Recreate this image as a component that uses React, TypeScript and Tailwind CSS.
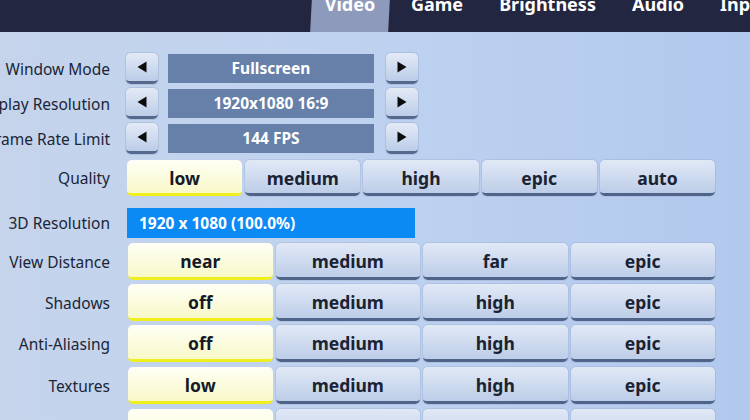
import React from 'react'

const font = { fontFamily: '"Noto Sans", "Open Sans", sans-serif' }

function ArrowButton({ dir }: { dir: 'left' | 'right' }) {
  return (
    <div className="w-[32px] h-[31px] rounded-[5px] bg-gradient-to-b from-[#e3eaf6] to-[#bccde8] border-b-[3px] border-[#55698f] flex items-center justify-center shadow-[0_0_0_1px_rgba(120,140,175,0.25)]">
      <svg width="12" height="12" viewBox="0 0 12 12">
        {dir === 'left' ? (
          <path d="M10.5 0.5 L1.5 6 L10.5 11.5 Z" fill="#0c0c0c" />
        ) : (
          <path d="M1.5 0.5 L10.5 6 L1.5 11.5 Z" fill="#0c0c0c" />
        )}
      </svg>
    </div>
  )
}

function Label({ text }: { text: string }) {
  return (
    <div className="w-[110px] shrink-0 flex justify-end mr-[17px] pt-[2px]">
      <span className="whitespace-nowrap text-[15.5px] text-[#1b2538]">{text}</span>
    </div>
  )
}

function Choice({ text, active }: { text: string; active?: boolean }) {
  return (
    <div
      className={
        active
          ? 'h-full pt-[3px] rounded-[5px] bg-gradient-to-b from-[#fffff6] to-[#f8f8c8] border-b-[3px] border-[#f0ee1c] flex items-center justify-center text-[17.5px] font-bold text-[#151a26]'
          : 'h-full pt-[3px] rounded-[5px] bg-gradient-to-b from-[#e1e9f6] to-[#bdcde8] border-b-[3px] border-[#506489] flex items-center justify-center text-[17.5px] font-bold text-[#1b2232] shadow-[0_0_0_1px_rgba(120,140,175,0.2)]'
      }
    >
      {text}
    </div>
  )
}

function SelectorRow({ label, value, className }: { label: string; value: string; className: string }) {
  return (
    <div className={`flex items-center h-[31px] ${className}`}>
      <Label text={label} />
      <div className="-ml-[1px]">
        <ArrowButton dir="left" />
      </div>
      <div className="ml-[10px] w-[206px] h-[29px] pt-[1px] bg-[#6680a9] flex items-center justify-center text-[15.5px] font-bold text-white">
        {value}
      </div>
      <div className="ml-[12px]">
        <ArrowButton dir="right" />
      </div>
    </div>
  )
}

function FourRow({ label, options, className }: { label: string; options: string[]; className: string }) {
  return (
    <div className={`flex items-center h-[37px] ${className}`}>
      <Label text={label} />
      <div className="ml-[1px] w-[587px] h-full grid grid-cols-4 gap-[3px]">
        {options.map((o, i) => (
          <Choice key={i} text={o} active={i === 0} />
        ))}
      </div>
    </div>
  )
}

export default function App() {
  return (
    <div className="w-[750px] h-[420px] overflow-hidden flex flex-col bg-gradient-to-r from-[#c5d4eb] via-[#bed2f0] to-[#b2c8ed]" style={font}>
      {/* Tab bar */}
      <div className="h-[32px] shrink-0 bg-[#232640] overflow-hidden flex text-white font-bold text-[18px] leading-[20px]">
        <div className="ml-[311px] w-[78px] shrink-0 h-full relative flex justify-center">
          <div className="absolute inset-0 -skew-x-3 bg-[#8e9abb]" />
          <span className="relative -mt-[6px]">Video</span>
        </div>
        <div className="ml-[22px] shrink-0 flex gap-[36px] -mt-[6px] whitespace-nowrap">
          <span>Game</span>
          <span>Brightness</span>
          <span>Audio</span>
          <span>Input</span>
        </div>
      </div>

      {/* Settings */}
      <div className="flex flex-col">
        <SelectorRow label="Window Mode" value="Fullscreen" className="mt-[21px]" />
        <SelectorRow label="Display Resolution" value="1920x1080 16:9" className="mt-[4px]" />
        <SelectorRow label="Frame Rate Limit" value="144 FPS" className="mt-[4px]" />

        <div className="flex items-center h-[36px] mt-[6px]">
          <Label text="Quality" />
          <div className="w-[588px] h-full grid grid-cols-5 gap-[3px]">
            {['low', 'medium', 'high', 'epic', 'auto'].map((o, i) => (
              <Choice key={o} text={o} active={i === 0} />
            ))}
          </div>
        </div>

        <div className="flex items-center h-[30px] mt-[12px]">
          <Label text="3D Resolution" />
          <div className="w-[288px] h-full pt-[1px] bg-[#0b8af4] flex items-center pl-[12px] text-[15.5px] font-bold text-white">
            1920 x 1080 (100.0%)
          </div>
        </div>

        <FourRow label="View Distance" options={['near', 'medium', 'far', 'epic']} className="mt-[5px]" />
        <FourRow label="Shadows" options={['off', 'medium', 'high', 'epic']} className="mt-[4px]" />
        <FourRow label="Anti-Aliasing" options={['off', 'medium', 'high', 'epic']} className="mt-[4px]" />
        <FourRow label="Textures" options={['low', 'medium', 'high', 'epic']} className="mt-[5px]" />
        <FourRow label="Effects" options={['low', 'medium', 'high', 'epic']} className="mt-[5px]" />
      </div>
    </div>
  )
}
